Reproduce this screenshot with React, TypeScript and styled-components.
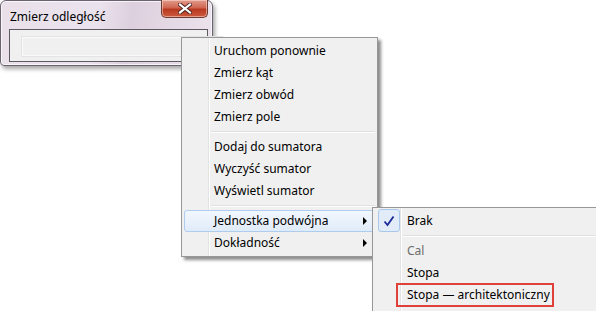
import styled, { createGlobalStyle } from 'styled-components';

const GlobalStyle = createGlobalStyle`
    html, body {
        margin: 0;
        padding: 0;
        background: #ffffff;
    }
    body {
        font-family: 'Noto Sans', 'Open Sans', sans-serif;
        font-size: 12px;
        color: #000;
    }
`;

const Desktop = styled.div`
    position: relative;
    width: 596px;
    height: 311px;
    overflow: hidden;
    background: #fff;
`;

const Window = styled.div`
    position: absolute;
    left: 0;
    top: 0;
    width: 213px;
    height: 66px;
    box-sizing: border-box;
    border: 1px solid #6b6470;
    border-radius: 6px 6px 4px 4px;
    background: linear-gradient(
        100deg,
        #e9e0ea 0%,
        #eae2ec 45%,
        #ddd0de 60%,
        #ece4ed 100%
    );
    box-shadow:
        inset 0 0 0 1px rgba(255, 255, 255, 0.7),
        2px 3px 4px rgba(0, 0, 0, 0.35);
    display: flex;
    flex-direction: column;
    padding: 0 4px 3px 8px;
`;

const TitleBar = styled.div`
    height: 28px;
    display: flex;
    align-items: flex-start;
    justify-content: space-between;
`;

const Title = styled.div`
    padding: 8px 0 0 1px;
    font-size: 12px;
    line-height: 16px;
    color: #000;
`;

const CloseButton = styled.div`
    width: 47px;
    height: 18px;
    margin-top: -1px;
    box-sizing: border-box;
    border: 1px solid #6e3a34;
    border-top: none;
    border-radius: 0 0 5px 5px;
    background: linear-gradient(
        to bottom,
        #e29c8c 0%,
        #d06652 45%,
        #b8391f 55%,
        #cc5a40 100%
    );
    box-shadow: inset 0 0 0 1px rgba(255, 230, 220, 0.5);
    display: flex;
    align-items: center;
    justify-content: center;
`;

const ClientArea = styled.div`
    flex: 1;
    box-sizing: border-box;
    border: 1px solid #5d5862;
    background: #f0f0f0;
    padding: 7px 0 0 12px;
`;

const TextField = styled.div`
    width: 200px;
    height: 19px;
    box-sizing: border-box;
    border: 1px solid #fafafa;
    border-right: none;
    outline: 1px solid #e3e3e3;
    background: #f0f0f0;
`;

const Menu = styled.div<{ $left: number; $top: number; $width: number; $height: number; $gutter: number }>`
    position: absolute;
    left: ${(p) => p.$left}px;
    top: ${(p) => p.$top}px;
    width: ${(p) => p.$width}px;
    height: ${(p) => p.$height}px;
    box-sizing: border-box;
    border: 1px solid #979797;
    background:
        linear-gradient(to right, transparent ${(p) => p.$gutter}px, #e2e3e3 ${(p) => p.$gutter}px, #e2e3e3 ${(p) => p.$gutter + 1}px, #ffffff ${(p) => p.$gutter + 1}px, #ffffff ${(p) => p.$gutter + 2}px, transparent ${(p) => p.$gutter + 2}px),
        #f0f0f0;
    box-shadow: 3px 3px 3px rgba(0, 0, 0, 0.45);
    padding: 2px;
    display: flex;
    flex-direction: column;
`;

const Item = styled.div<{ $active?: boolean; $disabled?: boolean; $indent: number }>`
    position: relative;
    height: 22px;
    flex-shrink: 0;
    box-sizing: border-box;
    display: flex;
    align-items: center;
    padding-left: ${(p) => p.$indent}px;
    color: ${(p) => (p.$disabled ? '#6d6d6d' : '#000')};
    white-space: nowrap;
    border-radius: 3px;
    border: 1px solid ${(p) => (p.$active ? '#aeccf0' : 'transparent')};
    background: ${(p) =>
        p.$active ? 'linear-gradient(to bottom, #f2f7fd, #e0ebf9)' : 'transparent'};
`;

const ItemText = styled.span`
    font-size: 12px;
    line-height: 16px;
`;

const Arrow = styled.span`
    position: absolute;
    right: 7px;
    top: 6px;
    width: 0;
    height: 0;
    border-top: 4px solid transparent;
    border-bottom: 4px solid transparent;
    border-left: 4px solid #000;
`;

const Separator = styled.div<{ $indent: number }>`
    height: 8px;
    flex-shrink: 0;
    margin-left: ${(p) => p.$indent}px;
    display: flex;
    flex-direction: column;
    justify-content: center;

    &::before {
        content: '';
        display: block;
        height: 1px;
        background: #e0e0e0;
    }
    &::after {
        content: '';
        display: block;
        height: 1px;
        background: #ffffff;
    }
`;

const CheckBox = styled.span`
    position: absolute;
    left: 2px;
    top: -2px;
    width: 22px;
    height: 23px;
    box-sizing: border-box;
    border: 1px solid #a9c7ec;
    border-radius: 3px;
    background: #e2ecf9;
    display: flex;
    align-items: center;
    justify-content: center;
`;

const Highlight = styled.div`
    position: absolute;
    left: 20px;
    top: -2px;
    width: 158px;
    height: 24px;
    box-sizing: border-box;
    border: 2px solid #e0403a;
`;

function CloseGlyph() {
    return (
        <svg width="14" height="11" viewBox="0 0 14 11">
            <path
                d="M2 1.5 L12 9.5 M12 1.5 L2 9.5"
                stroke="#4a2420"
                strokeWidth="4"
                strokeLinecap="square"
            />
            <path
                d="M2 1.5 L12 9.5 M12 1.5 L2 9.5"
                stroke="#ffffff"
                strokeWidth="2.2"
                strokeLinecap="square"
            />
        </svg>
    );
}

function CheckGlyph() {
    return (
        <svg width="12" height="12" viewBox="0 0 12 12">
            <path
                d="M1.5 6.5 L4.5 10 L10.5 1.5"
                fill="none"
                stroke="#1d2a9a"
                strokeWidth="1.8"
            />
        </svg>
    );
}

const mainGroups = [
    ['Uruchom ponownie', 'Zmierz kąt', 'Zmierz obwód', 'Zmierz pole'],
    ['Dodaj do sumatora', 'Wyczyść sumator', 'Wyświetl sumator'],
];

export default function App() {
    return (
        <Desktop>
            <GlobalStyle />
            <Window>
                <TitleBar>
                    <Title>Zmierz odległość</Title>
                    <CloseButton>
                        <CloseGlyph />
                    </CloseButton>
                </TitleBar>
                <ClientArea>
                    <TextField />
                </ClientArea>
            </Window>

            <Menu $left={181} $top={37} $width={197} $height={220} $gutter={26}>
                {mainGroups.map((group, gi) => (
                    <div key={gi} style={{ display: 'contents' }}>
                        {group.map((label) => (
                            <Item key={label} $indent={29}>
                                <ItemText>{label}</ItemText>
                            </Item>
                        ))}
                        <Separator $indent={27} />
                    </div>
                ))}
                <Item $active $indent={29}>
                    <ItemText>Jednostka podwójna</ItemText>
                    <Arrow />
                </Item>
                <Item $indent={29}>
                    <ItemText>Dokładność</ItemText>
                    <Arrow />
                </Item>
            </Menu>

            <Menu $left={372} $top={207} $width={228} $height={110} $gutter={27}>
                <Item $indent={31}>
                    <CheckBox>
                        <CheckGlyph />
                    </CheckBox>
                    <ItemText>Brak</ItemText>
                </Item>
                <Separator $indent={28} />
                <Item $disabled $indent={31}>
                    <ItemText>Cal</ItemText>
                </Item>
                <Item $indent={31}>
                    <ItemText>Stopa</ItemText>
                </Item>
                <Item $indent={31}>
                    <Highlight />
                    <ItemText>Stopa — architektoniczny</ItemText>
                </Item>
            </Menu>
        </Desktop>
    );
}
